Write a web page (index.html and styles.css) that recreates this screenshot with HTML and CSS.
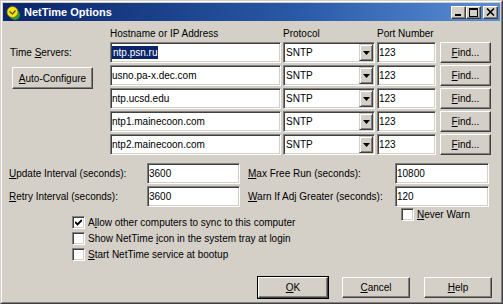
FILE: index.html
```html
<!DOCTYPE html>
<html>
<head>
<meta charset="utf-8">
<link rel="stylesheet" href="styles.css">
</head>
<body>
<div class="window">
  <div class="frame">
    <div class="titlebar">
      <svg class="app-icon" width="16" height="16" viewBox="0 0 16 16">
        <circle cx="10" cy="11" r="5" fill="#2c9a30"/>
        <circle cx="7.5" cy="8" r="5.5" fill="#f2e21a" stroke="#8a7a10" stroke-width="0.8"/>
        <path d="M4.5 7.5 L7.5 10 L10.5 6.5" fill="none" stroke="#5a4a00" stroke-width="1.2"/>
      </svg>
      <span class="title">NetTime Options</span>
      <div class="caption-buttons">
        <span class="cap-btn"><svg width="9" height="9" viewBox="0 0 9 9"><rect x="1" y="6" width="6" height="2" fill="#000"/></svg></span>
        <span class="cap-btn"><svg width="9" height="9" viewBox="0 0 9 9"><rect x="0.5" y="0.5" width="8" height="8" fill="none" stroke="#000"/><rect x="0" y="0" width="9" height="2" fill="#000"/></svg></span>
        <span class="cap-btn close"><svg width="9" height="8" viewBox="0 0 9 8"><path d="M1 0.5 L8 7.5 M8 0.5 L1 7.5" stroke="#000" stroke-width="1.6"/></svg></span>
      </div>
    </div>

    <div class="content">
      <div class="servers">
        <div class="col-head h-host">Hostname or IP Address</div>
        <div class="col-head h-proto">Protocol</div>
        <div class="col-head h-port">Port Number</div>

        <div class="servers-label">Time <u>S</u>ervers:</div>
        <button class="btn auto-btn"><u>A</u>uto-Configure</button>

        <div class="field host"><span class="selected">ntp.psn.ru</span></div>
        <div class="field select"><span>SNTP</span><span class="drop"><svg width="7" height="4" viewBox="0 0 7 4"><path d="M0 0 H7 L3.5 4 Z" fill="#000"/></svg></span></div>
        <div class="field port">123</div>
        <button class="btn find"><u>F</u>ind...</button>

        <div class="field host">usno.pa-x.dec.com</div>
        <div class="field select"><span>SNTP</span><span class="drop"><svg width="7" height="4" viewBox="0 0 7 4"><path d="M0 0 H7 L3.5 4 Z" fill="#000"/></svg></span></div>
        <div class="field port">123</div>
        <button class="btn find"><u>F</u>ind...</button>

        <div class="field host">ntp.ucsd.edu</div>
        <div class="field select"><span>SNTP</span><span class="drop"><svg width="7" height="4" viewBox="0 0 7 4"><path d="M0 0 H7 L3.5 4 Z" fill="#000"/></svg></span></div>
        <div class="field port">123</div>
        <button class="btn find"><u>F</u>ind...</button>

        <div class="field host">ntp1.mainecoon.com</div>
        <div class="field select"><span>SNTP</span><span class="drop"><svg width="7" height="4" viewBox="0 0 7 4"><path d="M0 0 H7 L3.5 4 Z" fill="#000"/></svg></span></div>
        <div class="field port">123</div>
        <button class="btn find"><u>F</u>ind...</button>

        <div class="field host">ntp2.mainecoon.com</div>
        <div class="field select"><span>SNTP</span><span class="drop"><svg width="7" height="4" viewBox="0 0 7 4"><path d="M0 0 H7 L3.5 4 Z" fill="#000"/></svg></span></div>
        <div class="field port">123</div>
        <button class="btn find"><u>F</u>ind...</button>
      </div>

      <div class="intervals">
        <div class="int-label"><u>U</u>pdate Interval (seconds):</div>
        <div class="field num">3600</div>
        <div class="int-label second"><u>M</u>ax Free Run (seconds):</div>
        <div class="field num">10800</div>

        <div class="int-label"><u>R</u>etry Interval (seconds):</div>
        <div class="field num">3600</div>
        <div class="int-label second"><u>W</u>arn If Adj Greater (seconds):</div>
        <div class="field num">120</div>
      </div>

      <div class="options">
        <div class="checks">
          <div class="check-row"><span class="checkbox"><svg width="7" height="7" viewBox="0 0 7 7"><path d="M0 3 L2.5 5.5 L7 1" fill="none" stroke="#000" stroke-width="1.8"/></svg></span><span>A<u>l</u>low other computers to sync to this computer</span></div>
          <div class="check-row"><span class="checkbox"></span><span>Show NetTime <u>i</u>con in the system tray at login</span></div>
          <div class="check-row"><span class="checkbox"></span><span><u>S</u>tart NetTime service at bootup</span></div>
        </div>
        <div class="never">
          <div class="check-row"><span class="checkbox"></span><span><u>N</u>ever Warn</span></div>
        </div>
      </div>

      <div class="actions">
        <button class="btn action default"><u>O</u>K</button>
        <button class="btn action"><u>C</u>ancel</button>
        <button class="btn action"><u>H</u>elp</button>
      </div>
    </div>
  </div>
</div>
</body>
</html>
```

FILE: styles.css
```css
* { box-sizing: border-box; }
html, body { margin: 0; padding: 0; }
body {
  width: 503px;
  height: 304px;
  overflow: hidden;
  background: #d4d0c8;
  font-family: "Liberation Sans", Arial, sans-serif;
  font-size: 10px;
  color: #000;
}
u { text-decoration: underline; text-underline-offset: 1px; }

.window {
  width: 503px;
  height: 304px;
  border: 1px solid;
  border-color: #d4d0c8 #404040 #404040 #d4d0c8;
}
.frame {
  height: 100%;
  border: 1px solid;
  border-color: #fff #808080 #808080 #fff;
  padding: 1px;
  display: flex;
  flex-direction: column;
  background: #d4d0c8;
}

.titlebar {
  height: 18px;
  flex: none;
  display: flex;
  align-items: center;
  padding: 0 2px 0 2px;
  background: linear-gradient(to right, #0a246a 0%, #2a5aa8 60%, #5a8fd6 100%);
}
.app-icon { flex: none; margin-right: 3px; }
.title {
  color: #fff;
  font-weight: bold;
  font-size: 11px;
}
.caption-buttons {
  margin-left: auto;
  display: flex;
}
.cap-btn {
  width: 15px;
  height: 13px;
  background: #d4d0c8;
  border: 1px solid;
  border-color: #fff #404040 #404040 #fff;
  box-shadow: inset -1px -1px #808080;
  display: flex;
  align-items: center;
  justify-content: center;
}
.cap-btn.close { margin-left: 2px; }

.content {
  flex: 1;
  display: flex;
  flex-direction: column;
  padding: 7px 0 3px 0;
}

.servers {
  display: grid;
  grid-template-columns: 105px 171px 92px 59px 53px;
  grid-template-rows: 12px repeat(5, 21px);
  column-gap: 2px;
  row-gap: 2px;
}
.col-head { line-height: 12px; white-space: nowrap; grid-row: 1; }
.h-host { grid-column: 2; }
.h-proto { grid-column: 3; }
.h-port { grid-column: 4; }

.servers-label {
  grid-column: 1;
  grid-row: 2;
  padding-left: 7px;
  align-self: center;
}
.auto-btn {
  grid-column: 1;
  grid-row: 3 / span 2;
  align-self: start;
  margin: 2px 0 0 9px;
  width: 81px;
  height: 22px;
}

.host { grid-column: 2; }
.select { grid-column: 3; }
.port { grid-column: 4; }
.find { grid-column: 5; }

.field {
  background: #fff;
  border: 1px solid;
  border-color: #808080 #fff #fff #808080;
  box-shadow: inset 1px 1px #404040, inset -1px -1px #d4d0c8;
  padding: 0 2px 0 2px;
  display: flex;
  align-items: center;
  white-space: nowrap;
  overflow: hidden;
  height: 21px;
}
.field.host { padding-left: 1px; }
.selected {
  background: #0a246a;
  color: #fff;
  padding: 1px 1px;
}
.field.select { padding: 2px 1px 2px 2px; }
.field.select .drop {
  margin-left: auto;
  width: 14px;
  height: 17px;
  background: #d4d0c8;
  border: 1px solid;
  border-color: #d4d0c8 #404040 #404040 #d4d0c8;
  box-shadow: inset 1px 1px #fff, inset -1px -1px #808080;
  display: flex;
  align-items: center;
  justify-content: center;
}
.field.port { padding-left: 1px; }

.btn {
  font-family: "Liberation Sans", Arial, sans-serif;
  font-size: 10px;
  color: #000;
  background: #d4d0c8;
  border: 1px solid;
  border-color: #fff #404040 #404040 #fff;
  box-shadow: inset -1px -1px #808080, inset 1px 1px #d4d0c8;
  padding: 0;
  display: flex;
  align-items: center;
  justify-content: center;
}
.find {
  margin-left: 2px;
  width: 51px;
  height: 21px;
}

.intervals {
  margin-top: 8px;
  display: grid;
  grid-template-columns: 144px 93px 155px 94px;
  grid-template-rows: 21px 21px;
  row-gap: 2px;
}
.int-label {
  padding-left: 6px;
  align-self: center;
  white-space: nowrap;
}
.int-label.second { padding-left: 8px; }
.field.num { padding-left: 1px; }

.options {
  display: flex;
  margin-top: 1px;
}
.checks {
  padding-left: 69px;
  padding-top: 8px;
  display: flex;
  flex-direction: column;
  gap: 3px;
}
.check-row {
  display: flex;
  align-items: center;
  gap: 3px;
  height: 13px;
  white-space: nowrap;
}
.checkbox {
  width: 13px;
  height: 13px;
  flex: none;
  background: #fff;
  border: 1px solid;
  border-color: #808080 #fff #fff #808080;
  box-shadow: inset 1px 1px #404040, inset -1px -1px #d4d0c8;
  display: flex;
  align-items: center;
  justify-content: center;
}
.never {
  margin-left: auto;
  width: 99px;
}

.actions {
  margin-top: auto;
  display: flex;
  justify-content: flex-end;
  gap: 14px;
  padding-right: 8px;
}
.action {
  width: 68px;
  height: 21px;
}
.action.default {
  width: 70px;
  border-color: #fff #404040 #404040 #fff;
  box-shadow: inset -1px -1px #808080, 0 0 0 1px #000;
}
```
